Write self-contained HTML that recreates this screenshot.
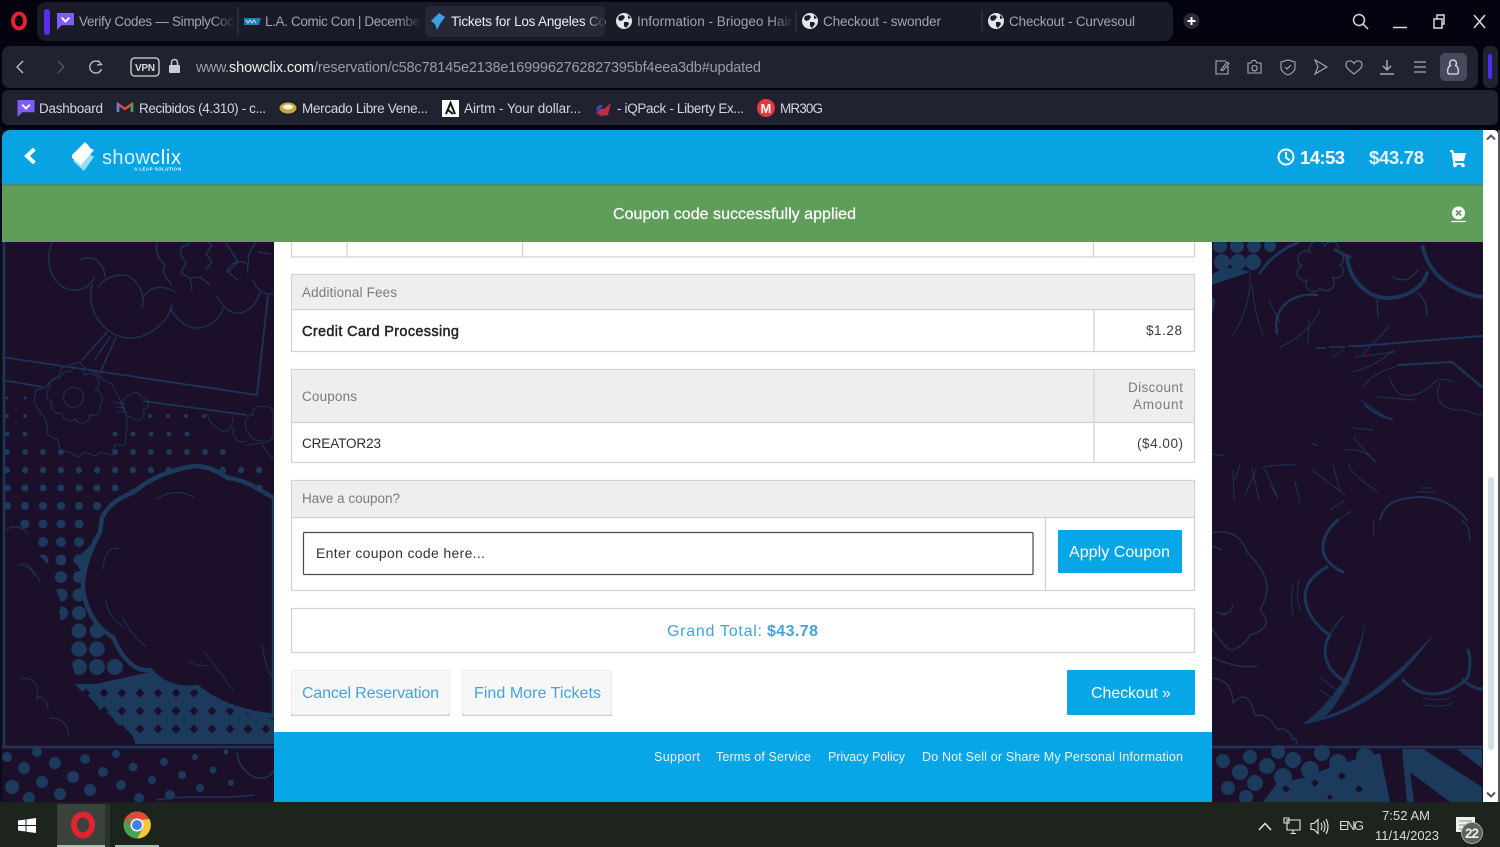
<!DOCTYPE html>
<html lang="en"><head><meta charset="utf-8"><title>Tickets for Los Angeles Comic Con</title>
<style>
html,body{margin:0;padding:0;width:1500px;height:847px;overflow:hidden;background:#03040f}
svg{display:block;position:absolute;left:0;top:0}
text{font-family:"Liberation Sans",Arial,sans-serif;white-space:pre}
.tab{font-size:13.500px;fill:#a2a4ae}
.bm{font-size:13.500px;fill:#d4d6dc}
.g{font-size:13.500px;fill:#7b7b7b}
.d{font-size:13.500px;fill:#3c3c3c}
.lnk{font-size:16px;fill:#45a2dc}
.ft{font-size:12.500px;fill:#eaf7fd}
.tb{font-size:13px;fill:#d8dcd8}
</style></head><body>
<svg width="1500" height="847" viewBox="0 0 1500 847" xmlns="http://www.w3.org/2000/svg">
<defs>
<pattern id="dm" x="5" y="684" width="18" height="18" patternUnits="userSpaceOnUse"><path d="M9 4.500 13.500 9 9 13.500 4.500 9Z" fill="#1c0f2a"/></pattern>
<clipPath id="pg"><rect x="2" y="242" width="1481" height="560"/></clipPath>
<symbol id="globe" viewBox="0 0 16 16"><circle cx="8" cy="8" r="8" fill="#e4e5e8"/><path d="M3 3 7 2 9 4 7 7 4 8 2 6ZM8 9 12 9 13 11 10 15 8 13ZM12 2 15 5 12 6Z" fill="#1a1b28"/></symbol>
<symbol id="mail" viewBox="0 0 18 18"><path d="M0 0H18V13H5L0 18Z" fill="#7f5cf3"/><path d="M5 5 9 9 13 5" fill="none" stroke="#fff" stroke-width="2"/></symbol>
<linearGradient id="fd"><stop offset="0" stop-color="#1a1b28" stop-opacity="0"/><stop offset="1" stop-color="#1a1b28"/></linearGradient>
<linearGradient id="fa"><stop offset="0" stop-color="#262838" stop-opacity="0"/><stop offset="1" stop-color="#262838"/></linearGradient>
</defs>

<!-- browser chrome -->
<rect width="1500" height="130" fill="#03040f"/>
<ellipse cx="19" cy="21" rx="6" ry="7.500" fill="none" stroke="#e8212f" stroke-width="3.800"/>
<rect x="37" y="2" width="1136" height="39" rx="9" fill="#1a1b28"/>
<rect x="44" y="9" width="6" height="26" rx="3" fill="#5a2df0"/>
<rect x="425" y="6" width="180" height="31" rx="5" fill="#262838"/>
<use href="#mail" x="57" y="13" width="17" height="17"/>
<path d="M244 18h17l-2 7h-15z" fill="#1d7fb0"/><path d="M246 20l2 3 2-3 2 3 2-3 2 3" stroke="#bfe3f5" fill="none" stroke-width="1"/>
<path d="M439 13 445 17 440 24 437 30 435 24 431 21Z" fill="#3b9fe2"/>
<use href="#globe" x="616" y="13" width="16" height="16"/>
<use href="#globe" x="802" y="13" width="16" height="16"/>
<use href="#globe" x="988" y="13" width="16" height="16"/>
<path d="M238 7V35M796 11V31M982 11V31" stroke="#3b3c49" stroke-width="1"/>
<text class="tab" x="79" y="26" textLength="155">Verify Codes — SimplyCoc</text>
<text class="tab" x="265" y="26" textLength="155">L.A. Comic Con | Decembe</text>
<text class="tab" x="451" y="26" textLength="155" style="fill:#eceef2">Tickets for Los Angeles Co</text>
<text class="tab" x="637" y="26" textLength="155">Information - Briogeo Hair</text>
<text class="tab" x="823" y="26" textLength="118">Checkout - swonder</text>
<text class="tab" x="1009" y="26" textLength="126">Checkout - Curvesoul</text>
<rect x="212" y="8" width="24" height="26" fill="url(#fd)"/>
<rect x="398" y="8" width="24" height="26" fill="url(#fd)"/>
<rect x="584" y="8" width="21" height="26" fill="url(#fa)"/>
<rect x="772" y="8" width="22" height="26" fill="url(#fd)"/>
<circle cx="1191.500" cy="21" r="8" fill="#2a2b38"/><path d="M1187.500 21h8M1191.500 17v8" stroke="#fff" stroke-width="2"/>
<g fill="none" stroke="#d8d9de" stroke-width="1.500">
<circle cx="1359" cy="20" r="5.500"/><path d="M1363 24 1368 29"/>
<path d="M1393 27.500H1407"/>
<path d="M1434 19h8v9h-8zM1437 19v-4h7v9h-2"/>
<path d="M1474 15 1485 28M1485 15 1474 28"/>
</g>
<rect x="2" y="46" width="1476" height="42" rx="8" fill="#21222f"/>
<rect x="1483" y="46" width="15" height="42" rx="6" fill="#21222f"/>
<rect x="1488" y="54" width="4" height="25" rx="2" fill="#4f2bf0"/>
<rect x="2" y="90" width="1496" height="35" rx="6" fill="#21222f"/>
<g fill="none" stroke="#c4c6cc" stroke-width="1.300">
<path d="M23 61 17 67 23 73"/>
<path d="M58 61 64 67 58 73" stroke="#55565f"/>
<path d="M101 64A6 6 0 1 0 101.500 69M98 60.500 101.500 64.500 97 65" />
<rect x="131" y="58" width="28" height="18" rx="3.500" stroke="#d6d8dc"/>
</g>
<text x="135" y="71" style="font-size:10px;font-weight:700;fill:#d6d8dc" textLength="20">VPN</text>
<rect x="169" y="65" width="11" height="8" rx="1" fill="#c9cbd0"/><path d="M171.500 65V62.500a3 3 0 0 1 6 0V65" fill="none" stroke="#c9cbd0" stroke-width="1.500"/>
<text x="196" y="72" style="font-size:14.500px;fill:#9b9da6" textLength="33">www.</text>
<text x="229" y="72" style="font-size:14.500px;fill:#eceef0" textLength="85">showclix.com</text>
<text x="314" y="72" style="font-size:14.500px;fill:#9b9da6" textLength="447">/reservation/c58c78145e2138e1699962762827395bf4eea3db#updated</text>
<g fill="none" stroke="#a9abb3" stroke-width="1.100">
<path d="M1226 61h-10v13h12V66M1221 70l6-8 2 1.500-6 7z"/>
<path d="M1248 63h3l1.500-2.500h3L1257 63h4v10h-13zM1254.500 65.500a2.700 2.700 0 1 0 .1 0"/>
<path d="M1281 62 1288 60 1295 62V68C1295 71 1291 74 1288 75 1285 74 1281 71 1281 68ZM1285 67l2 2 4-4"/>
<path d="M1315 60 1327 67 1315 74 1318 67Z"/>
<path d="M1354 74C1349 70 1346 68 1346 64.500 1346 60 1352 60 1354 63.500 1356 60 1362 60 1362 64.500 1362 68 1359 70 1354 74Z"/>
<path d="M1387 60V70M1383 66 1387 70 1391 66M1380 74H1394" stroke-width="1.500"/>
<path d="M1414 62H1426M1414 67H1426M1414 72H1426" stroke-width="1.300"/>
</g>
<rect x="1440" y="53" width="27" height="28" rx="5" fill="#474a5c"/>
<path d="M1453 60a3.300 3.300 0 0 1 2.500 5.500C1459 67 1459 74 1457 74h-8c-2 0-2-7 1.500-8.500A3.300 3.300 0 0 1 1453 60Z" fill="none" stroke="#e0e2e8" stroke-width="1.300"/>

<use href="#mail" x="17" y="100" width="18" height="17"/>
<text class="bm" x="39" y="113" textLength="64">Dashboard</text>
<path d="M118 112V104L125 109 132 104V112" fill="none" stroke="#e04a3a" stroke-width="2.500"/>
<path d="M118 112V104" stroke="#4a8bd8" stroke-width="2.500"/><path d="M132 112V104" stroke="#3aa757" stroke-width="2.500"/>
<text class="bm" x="139" y="113" textLength="127">Recibidos (4.310) - c...</text>
<ellipse cx="288" cy="108" rx="8.500" ry="5.500" fill="#c9a83c"/><ellipse cx="288" cy="107" rx="5" ry="2.500" fill="#f2f2ea"/>
<text class="bm" x="302" y="113" textLength="126">Mercado Libre Vene...</text>
<rect x="442" y="100" width="17" height="17" fill="#fff"/><path d="M446 114 450.500 103 455 114M448 110 453 114" fill="none" stroke="#111" stroke-width="2"/>
<text class="bm" x="464" y="113" textLength="117">Airtm - Your dollar...</text>
<path d="M596 113Q600 108 604 109L611 103 608 115 601 116Z" fill="#c52b45"/><path d="M596 108Q598 104 603 105L598 114Z" fill="#3a4aa0"/>
<text class="bm" x="617" y="113" textLength="127">- iQPack - Liberty Ex...</text>
<circle cx="766" cy="108" r="9" fill="#e8383e"/><text x="760.500" y="113" style="font-size:13px;font-weight:700;fill:#fff">M</text>
<text class="bm" x="780" y="113" textLength="43">MR30G</text>

<!-- page background art -->
<rect x="0" y="126" width="2" height="680" fill="#0a0c1a"/>
<rect x="2" y="130" width="1481" height="673" fill="#1c0f2a"/>
<g clip-path="url(#pg)" fill="none" stroke="#1a3557" stroke-linecap="round">
<!-- frame -->
<path d="M4 242V747M2 747H274M1212 747H1483" stroke-width="2.500" stroke-linecap="butt"/>
<!-- left halftone dots -->
<g stroke-dasharray="0 18" stroke="#1b3a5c">
<path d="M7 398H26" stroke-width="3"/>
<path d="M7 416H26M150 416H205" stroke-width="4"/>
<path d="M7 434H26M115 434H205" stroke-width="5"/>
<path d="M7 452H62M115 452H241" stroke-width="6"/>
<path d="M7 470H170M223 470H262" stroke-width="6.500"/>
<path d="M7 488H120M259 488H262" stroke-width="7"/>
<path d="M7 506H100" stroke-width="8"/>
<path d="M25 524H85" stroke-width="9"/>
<path d="M43 542H100" stroke-width="10"/>
<path d="M43 560H90" stroke-width="11"/>
<path d="M61 577H85" stroke-width="12"/>
<path d="M61 595H85" stroke-width="13"/>
<path d="M61 613H100" stroke-width="14"/>
<path d="M79 631H115" stroke-width="15"/>
<path d="M79 649H115" stroke-width="15.500"/>
<path d="M79 667H133" stroke-width="16"/>
</g>
<path d="M96 684 150 672 197 690 274 720V744H135L100 715 75 684ZM112 525 130 490 195 468 230 478 274 500V515H200L130 640 95 600 75 560Z" fill="#1b3a5c" stroke="none"/>
<rect x="70" y="684" width="205" height="54" fill="url(#dm)" stroke="none"/>
<!-- left filled cloud -->
<path d="M6 530C14 524 22 526 28 534 36 540 40 548 38 555 46 560 52 570 50 582 58 592 64 604 59 612 62 622 60 632 50 637 58 640 66 648 68 658 74 664 76 676 72 684 84 692 96 702 100 710 108 712 114 718 117 724 126 728 134 734 135 744H6Z" fill="#1c0f2a" stroke="none"/>
<path d="M28 534C22 526 14 524 6 530M22 565Q34 568 40 582" stroke-width="1"/>
<!-- centre cloud -->
<path d="M102 517C112 500 125 496 134 492 150 478 170 470 194 466 210 466 222 474 228 478 248 480 262 492 274 498V716C240 712 215 702 197 687 178 690 162 684 150 670 132 672 120 654 113 637 96 628 86 610 83 590 82 570 90 550 100 532Z" fill="#1c0f2a" stroke="#1b3a5c" stroke-width="4.500"/>
<path d="M157 499Q175 487 194 497M103 569Q105 545 118 549M106 600Q108 618 124 627M123 618Q134 640 146 646M189 661Q198 668 206 665M204 652 233 690M262 645Q266 670 274 680" stroke-width="1"/>
<!-- left comic panel and clouds -->
<path d="M2 357 257 395 268 295M2 380 43 387M143 401 247 415" stroke-width="1.800" stroke-linecap="butt"/>
<path d="M107 332 82 360M110 337 95 359M116 337 100 373" stroke-width="1.500"/>
<g stroke-width="1.300">
<path d="M52 243C44 258 50 290 75 290 84 290 92 285 94 277M80 260C88 256 97 258 100 264 104 268 105 273 105 277"/>
<path d="M92 285C85 310 105 338 130 338 150 338 168 322 172 305M98 287C105 277 120 272 130 277 140 283 145 296 142 308M143 298C148 288 160 283 175 292"/>
<path d="M170 308C178 322 188 328 197 328 208 328 220 320 223 308M217 297C225 310 232 313 237 313 248 313 256 305 260 293"/>
<path d="M157 243C154 255 162 262 165 265 160 275 170 280 171 285M190 243 182 247 180 254 186 262 181 273 190 278 192 290M226 243 238 262 228 272 238 280M190 278 200 277 210 285M205 270 212 262 206 254 212 245 208 243M227 272C230 262 242 258 247 265M255 243 248 256C250 262 246 270 248 273M253 280C256 290 265 295 273 294M258 252 270 254"/>
</g>
<g stroke-width="1">
<path d="M73 364 80 362 87 370 95 372 103 380 112 384 120 400 126 412 127 425 125 445 115 445 112 455 100 452 96 456 85 452 78 457 70 452 60 450 58 440 48 435 46 420 42 415 34 402 36 390 45 388 50 382 58 377 62 368Z"/>
<path d="M70 372A8 8 0 0 1 85 375 8 8 0 0 1 95 390 9 9 0 0 1 100 405 8 8 0 0 1 90 415 8 8 0 0 1 75 419 8 8 0 0 1 62 413 8 8 0 0 1 52 402 8 8 0 0 1 50 388 8 8 0 0 1 60 378 8 8 0 0 1 70 372ZM65 392A10 10 0 1 0 82 392 10 10 0 0 0 65 392Z"/>
<path d="M130 395A7 7 0 0 1 142 398 6 6 0 0 1 143 410 6 6 0 0 1 132 417 6 6 0 0 1 125 410 6 6 0 0 1 124 400 6 6 0 0 1 130 395ZM113 402 125 404M116 407 125 408M118 412 125 411"/>
<path d="M207 414C210 425 220 430 222 431 228 434 232 428 233 418M233 428C232 438 240 445 246 441M246 445 262 443C268 458 274 458 274 457"/>
<path d="M253 415A7 7 0 0 1 263 407 7 7 0 0 1 273 414V436A8 8 0 0 1 260 440 8 8 0 0 1 250 434 8 8 0 0 1 246 424 7 7 0 0 1 253 415Z"/>
</g>
<g stroke-width="1">
<path d="M21 679Q40 675 37 700M37 696Q48 698 48 709M50 718Q68 718 69 737" />
<path d="M6 530Q14 524 22 529M18 565Q30 560 34 575" />
</g>
<!-- bottom-left dots -->
<g fill="#1b3a5c" stroke="none">
<circle cx="12" cy="787" r="7"/><circle cx="24" cy="768" r="6"/><circle cx="42" cy="782" r="6"/><circle cx="55" cy="763" r="6"/><circle cx="73" cy="777" r="6"/><circle cx="85" cy="759" r="5"/><circle cx="90" cy="790" r="6"/><circle cx="103" cy="772" r="5"/><circle cx="121" cy="785" r="5"/><circle cx="133" cy="767" r="4.500"/><circle cx="152" cy="780" r="4"/><circle cx="164" cy="762" r="4"/><circle cx="182" cy="775" r="4"/><circle cx="195" cy="757" r="3"/><circle cx="200" cy="788" r="4"/><circle cx="213" cy="770" r="3.500"/><circle cx="231" cy="783" r="3"/><circle cx="226" cy="752" r="2.500"/><circle cx="29" cy="798" r="6"/><circle cx="60" cy="794" r="6"/><circle cx="7" cy="757" r="5"/><circle cx="37" cy="752" r="5"/><circle cx="116" cy="754" r="4"/><circle cx="170" cy="795" r="5"/><circle cx="139" cy="798" r="5"/>
</g>
<path d="M237 753C238 765 250 780 262 778 268 778 272 774 274 770M157 800C185 794 215 800 254 795" stroke-width="1.500"/>
<!-- right top dots and arcs -->
<g fill="#1b3a5c" stroke="none"><circle cx="1220" cy="246" r="7"/><circle cx="1237" cy="246" r="7"/><circle cx="1254" cy="246" r="7"/><circle cx="1270" cy="246" r="6"/><circle cx="1222" cy="262" r="8"/><circle cx="1238" cy="262" r="8"/><circle cx="1253" cy="262" r="8"/><path d="M1212 275Q1225 263 1250 272L1212 285Z"/><path d="M1212 296 1215 300 1212 316Z"/></g>
<path d="M1347 257C1350 283 1370 298 1387 298 1407 298 1423 287 1427 273M1423 247C1428 275 1455 293 1482 297" stroke-width="4"/>
<path d="M1260 273Q1273 253 1297 243M1335 250 1350 257" stroke-width="3"/>
<path d="M1393 277Q1408 285 1418 270M1377 300 1378 318M1417 293Q1427 300 1427 315" stroke-width="1.300"/>
<path d="M1325 246A7 7 0 0 1 1338 252 7 7 0 0 1 1340 265 7 7 0 0 1 1332 277 7 7 0 0 1 1320 288 7 7 0 0 1 1307 280 7 7 0 0 1 1302 266 7 7 0 0 1 1310 252 7 7 0 0 1 1325 246Z" stroke-width="1.300"/>
<path d="M1317 295C1290 292 1272 310 1277 333" stroke-width="2.500"/>
<path d="M1320 310Q1308 335 1280 347M1309 320 1308 344M1250 270Q1252 305 1233 335M1252 285Q1255 315 1263 335M1270 300Q1268 300 1280 322" stroke-width="1"/>
<path d="M1317 348H1325M1330 347H1345M1349 346H1360" stroke-width="1.800"/>
<path d="M1360 346 1482 336" stroke-width="2"/>
<path d="M1362 355 1390 326M1333 356 1343 350M1355 357 1395 352M1353 372Q1378 365 1393 350" stroke-width="1"/>
<path d="M1398 365 1452 362 1482 387" stroke-width="2.200"/>
<path d="M1363 387Q1373 373 1395 367M1390 378Q1395 395 1405 395 1420 398 1437 380 1445 378 1453 382M1440 383C1434 398 1440 410 1460 410 1470 410 1475 415 1482 415M1378 397 1415 400M1361 400 1390 420" stroke-width="1.100"/>
<path d="M1365 405Q1375 415 1392 419" stroke-width="2.200"/>
<path d="M1353 428 1373 430M1354 438 1375 462M1345 450Q1362 447 1376 462M1350 463Q1345 470 1378 492M1312 443 1318 446M1212 454 1225 456M1233 470 1234 500M1256 470 1245 495M1262 468Q1275 464 1295 465M1265 470 1278 498M1295 482 1300 503M1312 470 1345 495M1333 465 1340 490M1270 485 1278 498M1235 480 1240 465M1259 500 1252 468" stroke-width="1"/>
<path d="M1380 520C1384 505 1393 498 1420 497 1440 497 1455 505 1467 520" stroke-width="1.800"/>
<path d="M1420 488H1432M1417 492H1435M1330 510 1345 500M1338 520 1352 511" stroke-width="1"/>
<!-- right big cloud -->
<path d="M1338 520C1325 530 1320 545 1325 557 1330 565 1338 570 1343 572M1327 567C1307 578 1302 592 1307 607 1312 622 1322 630 1330 635M1330 635C1320 650 1325 672 1348 683" stroke-width="3"/>
<path d="M1330 635Q1335 625 1343 617M1373 520Q1375 525 1373 535M1462 520 1468 527 1470 540" stroke-width="1.300"/>
<path d="M1365 625Q1350 690 1303 724 1380 712 1433 635 1375 700 1325 717 1355 685 1365 625Z" fill="#1a3557" stroke-width=".5"/>
<path d="M1403 680C1420 700 1450 698 1468 677 1471 665 1470 655 1468 650M1463 680C1475 690 1483 690 1483 688" stroke-width="3"/>
<path d="M1293 585Q1290 600 1293 615M1299 580Q1295 600 1301 610M1321 678 1337 690M1320 690 1335 700M1423 698Q1445 702 1450 697M1424 705Q1445 708 1452 703" stroke-width=".9"/>
<path d="M1212 533C1225 530 1240 532 1247 552 1255 560 1268 575 1267 590 1266 598 1263 605 1260 610 1270 620 1268 630 1250 635 1245 645 1235 650 1230 650 1222 645 1216 635 1212 628M1212 657Q1240 670 1257 666M1222 615 1230 612 1233 605M1217 612 1226 615M1212 546 1222 550" stroke-width="1.300"/>
<path d="M1212 678C1225 680 1232 685 1233 703 1245 690 1252 700 1255 716 1265 712 1274 722 1277 730 1285 726 1292 734 1293 740 1298 735 1296 745 1296 745" stroke-width="1.300"/>
<!-- bottom-right dots and stripes -->
<g fill="#1b3a5c" stroke="none">
<circle cx="1223" cy="761" r="7"/><circle cx="1250" cy="757" r="7"/><circle cx="1278" cy="752" r="7"/><circle cx="1240" cy="772" r="8"/><circle cx="1267" cy="766" r="8"/><circle cx="1293" cy="760" r="8"/><circle cx="1322" cy="753" r="8"/><circle cx="1228" cy="788" r="7"/><circle cx="1255" cy="783" r="8"/><circle cx="1283" cy="777" r="9"/><circle cx="1310" cy="770" r="9"/><circle cx="1338" cy="763" r="9"/><circle cx="1365" cy="757" r="9"/><circle cx="1246" cy="797" r="7"/>
<path d="M1263 802 1277 783 1310 777 1323 770 1353 760 1380 753 1390 802Z"/>
<path d="M1402 749H1423L1482 787V802H1450L1410 772 1414 802H1407Z"/>
<path d="M1457 749H1482V768Z"/>
</g>
<g fill="#1c0f2a" stroke="none"><path d="M1286 785l4 4-4 4-4-4zM1315 779l4 4-4 4-4-4zM1342 772l4 4-4 4-4-4zM1359 785l4 4-4 4-4-4zM1330 794l3 3-3 3-3-3z"/></g>
</g>

<!-- main panel -->
<rect x="274" y="242" width="938" height="490" fill="#fff"/>
<rect x="274" y="732" width="938" height="70" fill="#07a6e6"/>
<g fill="none" stroke="#d2d2d2" stroke-width="1.200">
<path d="M291.500 242V257H1194.500V242M347 242V257M522.500 242V257M1093.500 242V257"/>
</g>
<path d="M560 240h6v2h-6zM805 240h6v2h-6z" fill="#444"/>
<rect x="291.500" y="274.500" width="903" height="77" fill="#fff" stroke="#d2d2d2" stroke-width="1.200"/>
<rect x="292" y="275" width="902" height="34" fill="#eeeeee"/>
<path d="M292 309.500H1194M1094 310V351" stroke="#d2d2d2" stroke-width="1.200"/>
<rect x="291.500" y="369.500" width="903" height="93" fill="#fff" stroke="#d2d2d2" stroke-width="1.200"/>
<rect x="292" y="370" width="902" height="52" fill="#eeeeee"/>
<path d="M292 422.500H1194M1094 370V462" stroke="#d2d2d2" stroke-width="1.200"/>
<rect x="291.500" y="480.500" width="903" height="110" fill="#fff" stroke="#d2d2d2" stroke-width="1.200"/>
<rect x="292" y="481" width="902" height="36" fill="#eeeeee"/>
<path d="M292 517.500H1194M1045.500 518V590" stroke="#d2d2d2" stroke-width="1.200"/>
<rect x="303.500" y="532.500" width="729.500" height="42" rx="1" fill="#fff" stroke="#4a4a4a" stroke-width="1.200"/>
<rect x="1058" y="530" width="124" height="43" rx="1" fill="#07a6e6"/>
<rect x="291.500" y="608.500" width="903" height="44" fill="#fff" stroke="#d2d2d2" stroke-width="1.200"/>
<rect x="291" y="670" width="159" height="45" rx="2" fill="#f7f7f7"/><path d="M291 715H450" stroke="#bdbdbd" stroke-width="1.500"/><rect x="291.500" y="670.500" width="158" height="44" rx="2" fill="none" stroke="#ececec"/>
<rect x="462" y="670" width="150" height="45" rx="2" fill="#f7f7f7"/><path d="M462 715H612" stroke="#bdbdbd" stroke-width="1.500"/><rect x="462.500" y="670.500" width="149" height="44" rx="2" fill="none" stroke="#ececec"/>
<rect x="1067" y="670" width="128" height="45" rx="1" fill="#07a6e6"/>

<text class="g" x="302" y="297" textLength="95">Additional Fees</text>
<text x="302" y="336" style="font-size:14.500px;fill:#222;stroke:#222;stroke-width:.45" textLength="157">Credit Card Processing</text>
<text class="d" x="1146" y="335" textLength="36">$1.28</text>
<text class="g" x="302" y="401" textLength="55">Coupons</text>
<text class="g" x="1128" y="392" textLength="55">Discount</text>
<text class="g" x="1133" y="409" textLength="50">Amount</text>
<text class="d" x="302" y="448" textLength="79" style="fill:#2c2c2c">CREATOR23</text>
<text class="d" x="1137" y="448" textLength="46">($4.00)</text>
<text class="g" x="302" y="503" textLength="98">Have a coupon?</text>
<text x="316" y="558" style="font-size:14px;fill:#333" textLength="169">Enter coupon code here...</text>
<text x="1069" y="557" style="font-size:16px;fill:#fff" textLength="101">Apply Coupon</text>
<text class="lnk" x="667" y="636" textLength="95">Grand Total:</text>
<text class="lnk" x="767" y="636" textLength="51" style="font-weight:700">$43.78</text>
<text class="lnk" x="302" y="698" textLength="137">Cancel Reservation</text>
<text class="lnk" x="474" y="698" textLength="127">Find More Tickets</text>
<text x="1091" y="698" style="font-size:16px;fill:#fff" textLength="67">Checkout</text>
<text x="1162" y="698" style="font-size:16px;fill:#fff">»</text>
<text class="ft" x="654" y="761" textLength="46">Support</text>
<text class="ft" x="716" y="761" textLength="95">Terms of Service</text>
<text class="ft" x="828" y="761" textLength="77">Privacy Policy</text>
<text class="ft" x="922" y="761" textLength="261">Do Not Sell or Share My Personal Information</text>

<!-- site header -->
<path d="M2 184V138a8 8 0 0 1 8-8H1483V184Z" fill="#07a3e2"/>
<path d="M58.500 131V184M1357.500 131V184M1436.500 131V184" stroke="#2a95cc" stroke-width="1"/>
<path d="M34.500 149 27 156 34.500 163" fill="none" stroke="#fff" stroke-width="4"/>
<path d="M73 161 84 171 94 157 84 150Z" fill="#9adcf5"/>
<path d="M72 155 85 142 89 146 90 148 94 150 81 165 72 158Z" fill="#fff"/>
<text x="102" y="164" style="font-size:20px;fill:#d5effb" textLength="48">show</text>
<text x="150" y="164" style="font-size:20px;fill:#fff" textLength="31">clix</text>
<text x="134" y="170.500" style="font-size:4.500px;font-weight:700;fill:#fff" textLength="47">A LEAP SOLUTION</text>
<circle cx="1286" cy="157" r="7.500" fill="none" stroke="#fff" stroke-width="2"/><path d="M1286 152V157.500L1290 160.500" fill="none" stroke="#fff" stroke-width="2"/>
<text x="1300" y="164" style="font-size:18.500px;font-weight:700;fill:#fff" textLength="45">14:53</text>
<text x="1369" y="164" style="font-size:18.500px;font-weight:700;fill:#e6f6fd" textLength="55">$43.78</text>
<path d="M1450 150H1453L1454 153H1466L1464 161H1455L1455.500 163H1464V165H1453.500L1451.500 152H1450Z" fill="#fff"/><circle cx="1455" cy="165.500" r="1.800" fill="#fff"/><circle cx="1463" cy="165.500" r="1.800" fill="#fff"/>

<!-- notification -->
<rect x="2" y="184" width="1481" height="58" fill="#5f9d5b"/>
<rect x="2" y="184" width="1481" height="2" fill="#4f8a66"/>
<text x="613" y="219" style="font-size:16px;font-weight:400;fill:#fff;stroke:#fff;stroke-width:.25" textLength="243">Coupon code successfully applied</text>
<circle cx="1458.500" cy="213" r="6.500" fill="#fff"/><path d="M1456 210.500 1461 215.500M1461 210.500 1456 215.500" stroke="#5f9d5b" stroke-width="1.800"/><path d="M1451 221.500H1466" stroke="#fff" stroke-width="1.200"/>

<!-- scrollbar -->
<rect x="1483" y="130" width="15" height="672" fill="#fff"/>
<rect x="1498" y="130" width="2" height="672" fill="#55565c"/>
<path d="M1494 130a4 4 0 0 1 4 4v-4z" fill="#03040f"/>
<rect x="1488" y="477" width="6" height="273" rx="3" fill="#d5dde6"/>
<path d="M1487 139.500 1491 135.500 1495 139.500M1487 792.500 1491 796.500 1495 792.500" fill="none" stroke="#55565c" stroke-width="2"/>

<!-- taskbar -->
<rect x="0" y="802" width="1500" height="45" fill="#1d231d"/>
<path d="M18 820.500 25.500 819.500V825H18ZM26.500 819.400 36 818V825H26.500ZM18 826H25.500V831.500L18 830.500ZM26.500 826H36V833L26.500 831.700Z" fill="#fff"/>
<rect x="57" y="804" width="48" height="43" fill="#3b423b"/>
<rect x="105" y="804" width="5" height="43" fill="#2c332c"/>
<rect x="57" y="845" width="48" height="2" fill="#a7c2b0"/>
<rect x="115" y="845" width="44" height="2" fill="#a7c2b0"/>
<ellipse cx="83" cy="825" rx="9" ry="10.500" fill="none" stroke="#e3222f" stroke-width="6"/>
<circle cx="137" cy="825" r="13.500" fill="#4aa351"/>
<path d="M137 811.500A13.500 13.500 0 0 1 149 818.500L137 819.500 126 817.500A13.500 13.500 0 0 1 137 811.500Z" fill="#e04a3a"/>
<path d="M124.500 820A13.500 13.500 0 0 1 127 816L133 828Z" fill="#e04a3a"/>
<path d="M149.500 819A13.500 13.500 0 0 1 137 838.500L143 828 140 820Z" fill="#f5c636"/>
<circle cx="137" cy="825" r="6.500" fill="#fff"/><circle cx="137" cy="825" r="5" fill="#3f81ea"/>
<path d="M1259 830 1265 823.500 1271 830" fill="none" stroke="#e4e8e4" stroke-width="1.500"/>
<g fill="none" stroke="#e4e8e4" stroke-width="1.100">
<path d="M1287 820H1300V830H1287ZM1290.500 833.500H1296M1293 830V833.500M1284 818h5v5h-5z"/>
<path d="M1311 823.500H1314L1318 819.500V833.500L1314 829.500H1311ZM1321 823Q1323 826.500 1321 830M1323.500 821Q1326.500 826.500 1323.500 832M1326 819Q1330 826.500 1326 834"/>
</g>
<text class="tb" x="1339" y="830" textLength="25">ENG</text>
<text class="tb" x="1382" y="820" textLength="48">7:52 AM</text>
<text class="tb" x="1375" y="840" textLength="64">11/14/2023</text>
<path d="M1456 817H1475V832H1456Z" fill="#eef0ee"/><path d="M1459 821H1472M1459 825H1472M1459 829H1468" stroke="#8a8f8a" stroke-width="1"/>
<circle cx="1472" cy="833" r="10.500" fill="#5c625c" stroke="#a9aea9"/>
<text x="1465" y="838" style="font-size:13.500px;font-weight:700;fill:#f0f2f0" textLength="14">22</text>
</svg>
</body></html>
